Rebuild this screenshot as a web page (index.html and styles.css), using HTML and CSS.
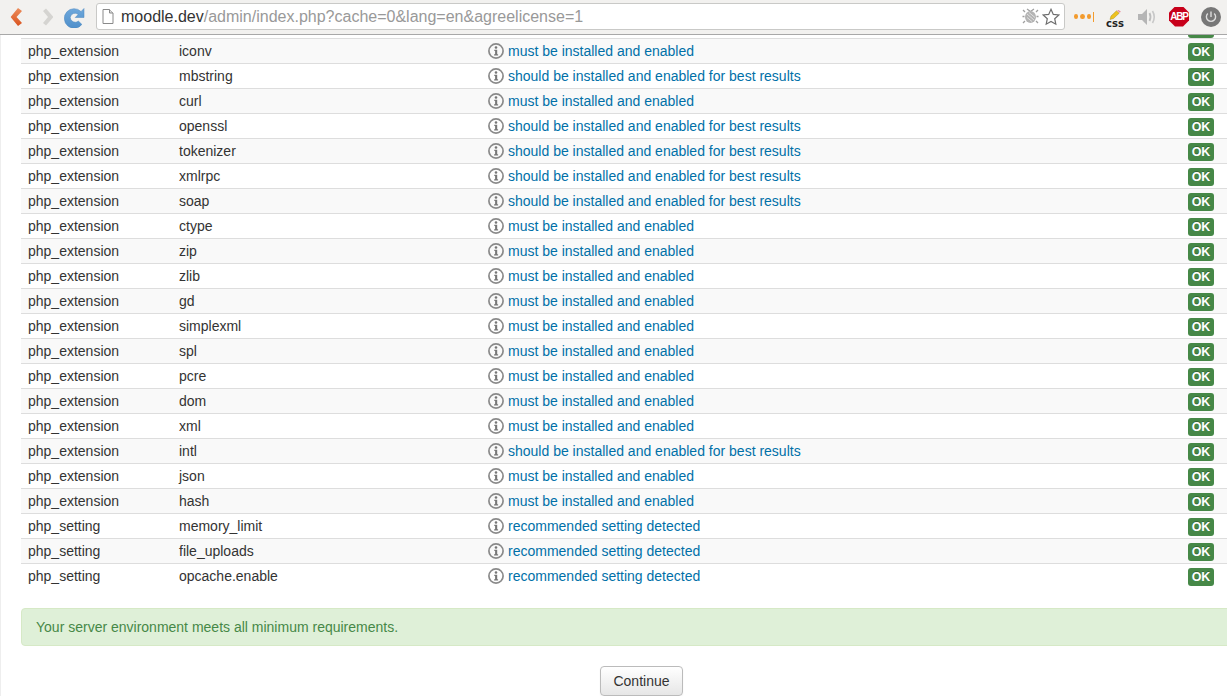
FILE: index.html
```html
<!DOCTYPE html>
<html lang="en">
<head>
<meta charset="utf-8">
<title>Moodle install</title>
<link rel="stylesheet" href="styles.css">
</head>
<body>
<svg class="defs" width="0" height="0" aria-hidden="true">
  <defs>
    <linearGradient id="back-fill" x1="0" y1="0" x2="0" y2="1"><stop offset="0" stop-color="#ec8d5c"/><stop offset="1" stop-color="#d9531e"/></linearGradient>
    <linearGradient id="reload-fill" x1="0" y1="0" x2="0" y2="1"><stop offset="0" stop-color="#6ea8dc"/><stop offset="1" stop-color="#4f8fca"/></linearGradient>
  </defs>
  <symbol id="info" viewBox="0 0 16 16">
    <circle cx="8" cy="8" r="7.100" fill="none" stroke="#8a8a8a" stroke-width="1.700"/>
    <circle cx="8" cy="4.500" r="1.300" fill="#777"/>
    <path d="M6.300 6.700H9.200v4.500h.9v1.300H6.100v-1.300h1v-3.200H6.300z" fill="#777"/>
  </symbol>
</svg>
<header class="toolbar">
  <svg class="nav nav-back" width="20" height="20" viewBox="0 0 20 20"><path d="M11 1 4 9.500q-.4.500 0 1L11 19l4-3-5.500-6L15 4z" fill="url(#back-fill)"/></svg>
  <svg class="nav nav-fwd" width="20" height="20" viewBox="0 0 20 20"><path d="M6 1.500 3 4l5 6-5 6 3 2.500 7-8v-1z" fill="#d5d4d1"/></svg>
  <svg class="nav nav-reload" width="22" height="22" viewBox="0 0 22 22"><path d="M20 2.500V11.500h-8.800l3-3A4.800 4.800 0 0 0 6.200 11.500a5 5 0 0 0 8.200 3.600l3.500 3.300A9.800 9.800 0 1 1 17 5.500z" fill="url(#reload-fill)" stroke="#4a86bf" stroke-width=".5"/></svg>
  <div class="address">
    <svg class="page-icon" width="12" height="15" viewBox="0 0 12 15"><path d="M1 .5h6.500L11 4v10.500H1z" fill="#fff" stroke="#8a8a8a"/><path d="M7.500.5V4H11" fill="#ddd" stroke="#8a8a8a"/></svg>
    <span class="url"><span class="host">moodle.dev</span>/admin/index.php?cache=0&amp;lang=en&amp;agreelicense=1</span>
    <svg class="bug" width="17" height="17" viewBox="0 0 17 17"><g stroke="#a0a0a0" stroke-width="1.300"><path d="M3 4 1 2M2.500 8.500H.5M3 13l-2 2M14 4l2-2M14.500 8.500h2M14 13l2 2M8.500 3.500 5 1M8.500 3.500 12 1"/></g><ellipse cx="8.500" cy="9" rx="5.500" ry="6" fill="#b4b4b4"/><path d="M5 6l7 6M5 9.500l5 4M7 4.500l6 5" stroke="#e0e0e0"/></svg>
    <svg class="star" width="18" height="18" viewBox="0 0 18 18"><path d="M9 1.300l2.300 5.100 5.500.6-4.100 3.700 1.100 5.500L9 13.500l-4.800 2.700 1.100-5.500L1.200 7l5.500-.6z" fill="#fff" stroke="#6e6e6e" stroke-width="1.200"/></svg>
  </div>
  <div class="ext ext-dots"><i></i><i></i><i></i><b></b></div>
  <div class="ext ext-css">
    <svg width="12" height="10" viewBox="0 0 12 10"><path d="M1 9.500l1-3.500L7.500.8l2.700 2.400L4.500 8.500z" fill="#eec21f" stroke="#9a7d12" stroke-width=".4"/><path d="M8.200.4l2.600 2.400 1-1.200L9.500 0z" fill="#e88a9a"/></svg>
    <span class="css-label">css</span>
  </div>
  <svg class="ext ext-vol" width="20" height="18" viewBox="0 0 20 18"><path d="M1 6h4l5-5v16l-5-5H1z" fill="#b5b5b5"/><path d="M12.500 5q2 4 0 8" fill="none" stroke="#bdbdbd" stroke-width="1.800"/><path d="M15.500 3q3.500 6 0 12" fill="none" stroke="#c8c8c8" stroke-width="1.600"/></svg>
  <div class="ext ext-abp"><span>ABP</span></div>
  <svg class="ext ext-power" width="20" height="20" viewBox="0 0 20 20"><circle cx="10" cy="10" r="10" fill="#777"/><path d="M6.800 6.500a4.600 4.600 0 1 0 6.400 0" fill="none" stroke="#ddd" stroke-width="1.400"/><path d="M10 4.500v5.500" stroke="#ddd" stroke-width="1.400"/></svg>
</header>
<main class="page">
  <div class="sliver"><span class="badge"></span></div>
  <div class="checks">
    <div class="row"><span class="c-type">php_extension</span><span class="c-name">iconv</span><span class="c-info"><svg class="info"><use href="#info"/></svg><a>must be installed and enabled</a></span><span class="badge">OK</span></div>
    <div class="row"><span class="c-type">php_extension</span><span class="c-name">mbstring</span><span class="c-info"><svg class="info"><use href="#info"/></svg><a>should be installed and enabled for best results</a></span><span class="badge">OK</span></div>
    <div class="row"><span class="c-type">php_extension</span><span class="c-name">curl</span><span class="c-info"><svg class="info"><use href="#info"/></svg><a>must be installed and enabled</a></span><span class="badge">OK</span></div>
    <div class="row"><span class="c-type">php_extension</span><span class="c-name">openssl</span><span class="c-info"><svg class="info"><use href="#info"/></svg><a>should be installed and enabled for best results</a></span><span class="badge">OK</span></div>
    <div class="row"><span class="c-type">php_extension</span><span class="c-name">tokenizer</span><span class="c-info"><svg class="info"><use href="#info"/></svg><a>should be installed and enabled for best results</a></span><span class="badge">OK</span></div>
    <div class="row"><span class="c-type">php_extension</span><span class="c-name">xmlrpc</span><span class="c-info"><svg class="info"><use href="#info"/></svg><a>should be installed and enabled for best results</a></span><span class="badge">OK</span></div>
    <div class="row"><span class="c-type">php_extension</span><span class="c-name">soap</span><span class="c-info"><svg class="info"><use href="#info"/></svg><a>should be installed and enabled for best results</a></span><span class="badge">OK</span></div>
    <div class="row"><span class="c-type">php_extension</span><span class="c-name">ctype</span><span class="c-info"><svg class="info"><use href="#info"/></svg><a>must be installed and enabled</a></span><span class="badge">OK</span></div>
    <div class="row"><span class="c-type">php_extension</span><span class="c-name">zip</span><span class="c-info"><svg class="info"><use href="#info"/></svg><a>must be installed and enabled</a></span><span class="badge">OK</span></div>
    <div class="row"><span class="c-type">php_extension</span><span class="c-name">zlib</span><span class="c-info"><svg class="info"><use href="#info"/></svg><a>must be installed and enabled</a></span><span class="badge">OK</span></div>
    <div class="row"><span class="c-type">php_extension</span><span class="c-name">gd</span><span class="c-info"><svg class="info"><use href="#info"/></svg><a>must be installed and enabled</a></span><span class="badge">OK</span></div>
    <div class="row"><span class="c-type">php_extension</span><span class="c-name">simplexml</span><span class="c-info"><svg class="info"><use href="#info"/></svg><a>must be installed and enabled</a></span><span class="badge">OK</span></div>
    <div class="row"><span class="c-type">php_extension</span><span class="c-name">spl</span><span class="c-info"><svg class="info"><use href="#info"/></svg><a>must be installed and enabled</a></span><span class="badge">OK</span></div>
    <div class="row"><span class="c-type">php_extension</span><span class="c-name">pcre</span><span class="c-info"><svg class="info"><use href="#info"/></svg><a>must be installed and enabled</a></span><span class="badge">OK</span></div>
    <div class="row"><span class="c-type">php_extension</span><span class="c-name">dom</span><span class="c-info"><svg class="info"><use href="#info"/></svg><a>must be installed and enabled</a></span><span class="badge">OK</span></div>
    <div class="row"><span class="c-type">php_extension</span><span class="c-name">xml</span><span class="c-info"><svg class="info"><use href="#info"/></svg><a>must be installed and enabled</a></span><span class="badge">OK</span></div>
    <div class="row"><span class="c-type">php_extension</span><span class="c-name">intl</span><span class="c-info"><svg class="info"><use href="#info"/></svg><a>should be installed and enabled for best results</a></span><span class="badge">OK</span></div>
    <div class="row"><span class="c-type">php_extension</span><span class="c-name">json</span><span class="c-info"><svg class="info"><use href="#info"/></svg><a>must be installed and enabled</a></span><span class="badge">OK</span></div>
    <div class="row"><span class="c-type">php_extension</span><span class="c-name">hash</span><span class="c-info"><svg class="info"><use href="#info"/></svg><a>must be installed and enabled</a></span><span class="badge">OK</span></div>
    <div class="row"><span class="c-type">php_setting</span><span class="c-name">memory_limit</span><span class="c-info"><svg class="info"><use href="#info"/></svg><a>recommended setting detected</a></span><span class="badge">OK</span></div>
    <div class="row"><span class="c-type">php_setting</span><span class="c-name">file_uploads</span><span class="c-info"><svg class="info"><use href="#info"/></svg><a>recommended setting detected</a></span><span class="badge">OK</span></div>
    <div class="row"><span class="c-type">php_setting</span><span class="c-name">opcache.enable</span><span class="c-info"><svg class="info"><use href="#info"/></svg><a>recommended setting detected</a></span><span class="badge">OK</span></div>
  </div>
  <div class="alert">Your server environment meets all minimum requirements.</div>
  <div class="actions"><button class="btn" type="button">Continue</button></div>
</main>
</body>
</html>
```
FILE: styles.css
```css
* { box-sizing: border-box; }
html, body {
  margin: 0;
  height: 100%;
  overflow: hidden;
  background: #fff;
}
body {
  display: flex;
  flex-direction: column;
  font-family: "Liberation Sans", Arial, sans-serif;
  font-size: 14px;
  color: #333;
}
.defs { position: absolute; }

.toolbar {
  flex: none;
  height: 35px;
  display: flex;
  align-items: center;
  padding: 3px 6px 4px 6px;
  background: #f2f1ef;
  border-bottom: 1px solid #a8a8a8;
}
.nav { flex: none; }
.nav-back { margin-left: 1px; }
.nav-fwd { margin-left: 13px; }
.nav-reload { margin-left: 4px; }
.address {
  flex: none;
  width: 969px;
  height: 27px;
  margin-left: 10px;
  display: flex;
  align-items: center;
  padding: 0 3px 0 5px;
  background: #fff;
  border: 1px solid #c9c9c7;
  border-radius: 3px;
}
.page-icon { flex: none; }
.url {
  flex: 1;
  margin-left: 7px;
  font-size: 16px;
  color: #999;
  white-space: nowrap;
}
.host { color: #333; }
.bug { flex: none; margin-right: 3px; }
.star { flex: none; margin-right: 1px; }
.ext { flex: none; }
.ext-dots {
  width: 20px;
  height: 10px;
  margin-left: 9px;
  display: flex;
  align-items: center;
  gap: 2px;
}
.ext-dots i {
  width: 5px;
  height: 5px;
  border-radius: 50%;
  background: #f39b2d;
}
.ext-dots b {
  width: 1px;
  height: 10px;
  background: #f39b2d;
}
.ext-css {
  width: 20px;
  margin-left: 11px;
  display: flex;
  flex-direction: column;
  align-items: center;
  padding-top: 4px;
}
.css-label {
  font-family: "DejaVu Sans", sans-serif;
  font-size: 10px;
  font-weight: 700;
  line-height: 8px;
  color: #222;
}
.ext-vol { margin-left: 12px; }
.ext-abp {
  width: 20px;
  height: 20px;
  margin-left: 12px;
  display: flex;
  align-items: center;
  justify-content: center;
  background: #c8001a;
  clip-path: polygon(30% 0, 70% 0, 100% 30%, 100% 70%, 70% 100%, 30% 100%, 0 70%, 0 30%);
}
.ext-abp span {
  font-size: 10px;
  font-weight: 700;
  letter-spacing: -1.200px;
  color: #fff;
}
.ext-power { margin-left: 12px; }

.page {
  flex: 1;
  min-height: 0;
  overflow: hidden;
  padding-left: 20px;
  border-left: 1px solid #eee;
}
.sliver {
  height: 3px;
  overflow: hidden;
  display: flex;
  justify-content: flex-end;
  align-items: flex-end;
  width: 1206px;
  padding-right: 13px;
}

.row {
  display: flex;
  align-items: center;
  width: 1206px;
  height: 25px;
  padding: 0 13px 0 7px;
  border-top: 1px solid #ddd;
}
.row:nth-child(odd) { background: #f9f9f9; }
.c-type { flex: none; width: 151px; }
.c-name { flex: none; width: 309px; }
.c-info {
  flex: 1;
  display: flex;
  align-items: center;
  gap: 4px;
  color: #0070a8;
}
.info { flex: none; width: 16px; height: 16px; }
.badge {
  flex: none;
  width: 26px;
  height: 18px;
  margin-top: 2px;
  display: flex;
  align-items: center;
  justify-content: center;
  background: #468847;
  border-radius: 3px;
  color: #fff;
  font-size: 12.500px;
  font-weight: 700;
  text-shadow: 0 -1px 0 rgba(0, 0, 0, .25);
}
.alert {
  width: 1220px;
  height: 38px;
  margin-top: 20px;
  padding: 0 14px;
  display: flex;
  align-items: center;
  background: #dff0d8;
  border: 1px solid #d6e9c6;
  border-radius: 4px;
  color: #468847;
}
.actions {
  width: 1241px;
  margin-top: 20px;
  display: flex;
  justify-content: center;
}
.btn {
  width: 83px;
  height: 30px;
  padding: 0;
  font-family: inherit;
  font-size: 14px;
  color: #333;
  background: linear-gradient(#fff, #e6e6e6);
  border: 1px solid #bbb;
  border-radius: 4px;
  box-shadow: inset 0 1px 0 rgba(255, 255, 255, .2), 0 1px 2px rgba(0, 0, 0, .05);
}
```
